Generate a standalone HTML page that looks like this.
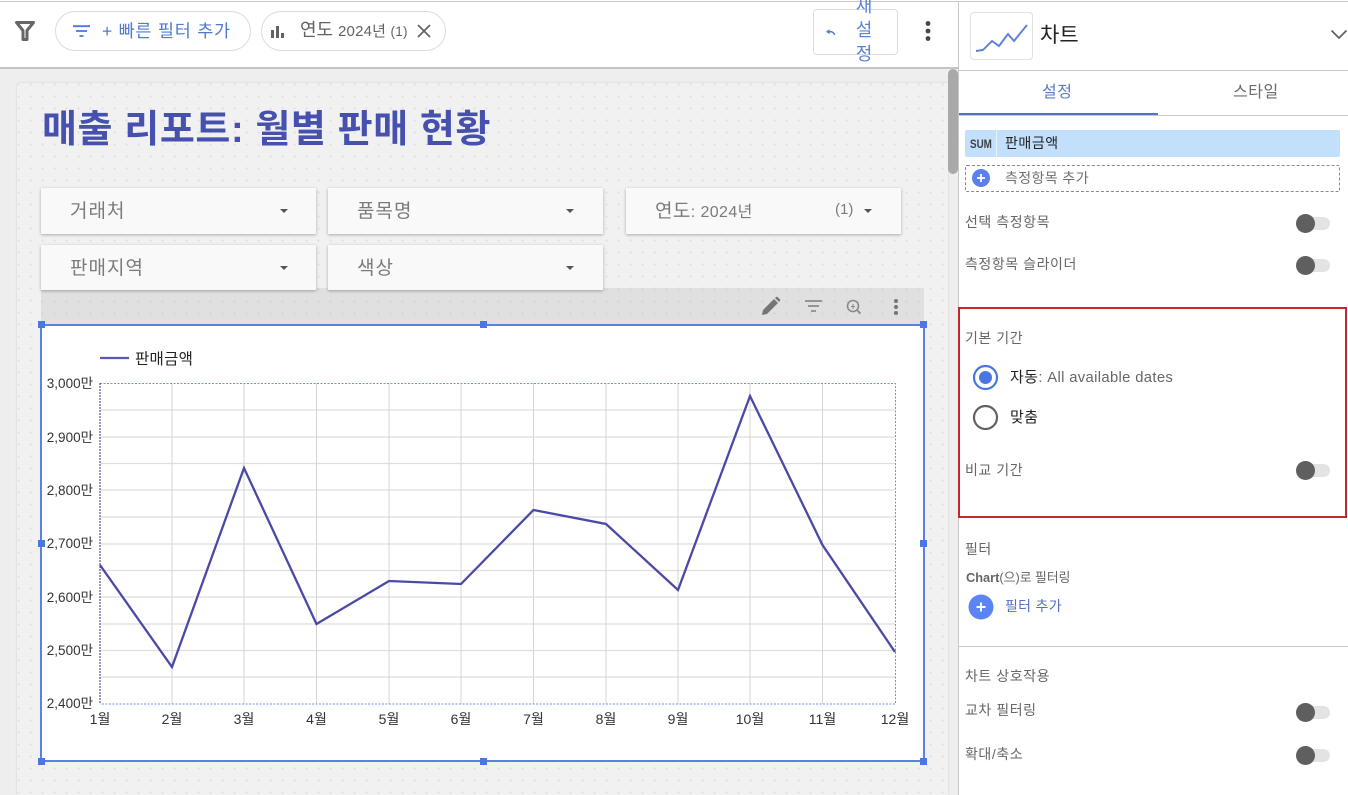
<!DOCTYPE html>
<html lang="ko"><head><meta charset="utf-8"><style>
html,body{margin:0;padding:0}
body{width:1348px;height:795px;position:relative;overflow:hidden;background:#fff;font-family:"Liberation Sans","Noto Sans CJK KR",sans-serif;color:#5f6368}
.a{position:absolute;white-space:nowrap}
.ctl{position:absolute;height:46px;background:#f9f9f9;box-shadow:0 1px 3px rgba(0,0,0,.3);font-size:19px;line-height:44px;color:#7b7b7b;letter-spacing:1px}
.ctl span{position:absolute;left:29px;top:2px}
.ctl i{position:absolute;top:21px;width:0;height:0;border-left:4px solid transparent;border-right:4px solid transparent;border-top:4px solid #555}
.h{position:absolute;width:7px;height:7px;background:#4a76e8}
.lbl{position:absolute;font-size:14px;line-height:18px;color:#666;white-space:nowrap;left:965px;letter-spacing:.55px}
.tg{position:absolute;left:1296px;width:34px;height:13px}
.tg b{position:absolute;left:6px;top:0;width:28px;height:13px;background:#e3e3e3;border-radius:7px}
.tg u{position:absolute;left:0;top:-3px;width:19px;height:19px;background:#5f5f5f;border-radius:50%}
</style></head><body>

<!-- canvas -->
<div class="a" style="left:0;top:68px;width:958px;height:727px;background:#eeeeee"></div>
<div class="a" style="left:17px;top:83px;width:931px;height:712px;background-color:#f1f1f1;background-image:radial-gradient(circle at 1.5px 1.5px,#dfdfdf 1px,transparent 1.2px);background-size:12px 12px;box-shadow:0 0 2px rgba(0,0,0,.12)"></div>
<div class="a" style="left:947.5px;top:69px;width:10px;height:105px;background:#a9a9a9;border-radius:5px"></div>

<!-- toolbar -->
<div class="a" style="left:0;top:0;width:958px;height:67px;background:#fff"></div>
<div class="a" style="left:0;top:1px;width:1348px;height:1px;background:#c8c8c8"></div>
<div class="a" style="left:0;top:67px;width:958px;height:2px;background:#c4c4c4"></div>
<svg class="a" style="left:14px;top:20px" width="22" height="22" viewBox="0 0 22 22"><path d="M2.500 2.500h17l-6.500 8v9h-4v-9z" fill="none" stroke="#666" stroke-width="3" stroke-linejoin="round"/></svg>

<div class="a" style="left:55px;top:11px;width:194px;height:38px;border:1px solid #dadce0;border-radius:20px"></div>
<svg class="a" style="left:73px;top:25px" width="17" height="13" viewBox="0 0 17 13"><path d="M0 1.200h17M3 6h11M6.500 11h4" stroke="#4a76d8" stroke-width="1.800"/></svg>
<div class="a" style="left:102px;top:20px;font-size:17.5px;line-height:22px;color:#5079d0;letter-spacing:.75px">+ 빠른 필터 추가</div>

<div class="a" style="left:261px;top:11px;width:183px;height:38px;border:1px solid #dadce0;border-radius:20px"></div>
<svg class="a" style="left:270px;top:26px" width="15" height="12" viewBox="0 0 15 12"><path d="M1 4h3v8H1zM6 0h3v12H6zM11 7h3v5h-3z" fill="#5f6368"/></svg>
<div class="a" style="left:300px;top:19px;font-size:18px;line-height:22px;color:#5f6368">연도</div>
<div class="a" style="left:338px;top:22px;font-size:15px;line-height:20px;color:#5f6368;letter-spacing:.2px">2024년 <span style="font-size:13.500px">(1)</span></div>
<svg class="a" style="left:417px;top:24px" width="14" height="14" viewBox="0 0 14 14"><path d="M1 1l12 12M13 1L1 13" stroke="#5f6368" stroke-width="1.700"/></svg>

<div class="a" style="left:813px;top:9px;width:83px;height:44px;border:1px solid #dadce0;border-radius:4px"></div>
<svg class="a" style="left:824px;top:27px" width="14" height="10" viewBox="0 0 14 10"><path d="M10.500 8C10 5.500 8 4.500 5 4.700" fill="none" stroke="#5079d0" stroke-width="1.500"/><path d="M2 4.700l3.600-2.600v5z" fill="#5079d0"/></svg>
<div class="a" style="left:855px;top:-6px;width:18px;font-size:18px;line-height:24px;color:#5a82d8;text-align:center;white-space:normal">새<br>설<br>정</div>
<svg class="a" style="left:923px;top:20px" width="10" height="22" viewBox="0 0 10 22"><circle cx="5" cy="3.500" r="2.400" fill="#444"/><circle cx="5" cy="11" r="2.400" fill="#444"/><circle cx="5" cy="18.500" r="2.400" fill="#444"/></svg>

<!-- title -->
<div class="a" style="left:42px;top:106px;font-size:38px;line-height:48px;font-weight:700;color:#4650ae;letter-spacing:.6px">매출 리포트: 월별 판매 현황</div>

<!-- chart header strip -->
<div class="a" style="left:41px;top:288px;width:883px;height:37px;background-color:#e0e0e0;background-image:radial-gradient(circle at 1.500px 1.500px,#d2d2d2 1px,transparent 1.200px);background-size:12px 12px"></div>

<!-- controls -->
<div class="ctl" style="left:41px;top:188px;width:275px"><span>거래처</span><i style="left:239px"></i></div>
<div class="ctl" style="left:328px;top:188px;width:275px"><span>품목명</span><i style="left:238px"></i></div>
<div class="ctl" style="left:626px;top:188px;width:275px"><span style="letter-spacing:.4px">연도<span style="position:static;font-size:16px">: 2024년</span></span><span style="left:209px;font-size:15px;top:0;letter-spacing:0">(1)</span><i style="left:238px"></i></div>
<div class="ctl" style="left:41px;top:245px;width:275px;height:45px"><span>판매지역</span><i style="left:239px"></i></div>
<div class="ctl" style="left:328px;top:245px;width:275px;height:45px"><span>색상</span><i style="left:238px"></i></div>

<svg class="a" style="left:760px;top:296px" width="150" height="22" viewBox="0 0 150 22">
<path d="M2 19l1-5L14 3l4 4L7 18z" fill="#757575"/><path d="M15 2l2-1.500 3.500 3.500-1.500 2z" fill="#757575"/>
<path d="M45 5h17M48 10h11M51 15h5" stroke="#8a8a8a" stroke-width="1.700" fill="none"/>
<circle cx="93" cy="10" r="5.500" fill="none" stroke="#8a8a8a" stroke-width="1.600"/><path d="M97 14l3.500 3.500" stroke="#8a8a8a" stroke-width="1.800"/><path d="M91 10.500h4M93 8v5" stroke="#8a8a8a" stroke-width="1"/>
<circle cx="136" cy="5" r="2" fill="#757575"/><circle cx="136" cy="11" r="2" fill="#757575"/><circle cx="136" cy="17" r="2" fill="#757575"/>
</svg>

<!-- chart -->
<div class="a" style="left:40px;top:324px;width:881px;height:434px;background:#fff;border:2px solid #5b80e2"></div>
<svg class="a" style="left:0;top:0" width="958" height="795" viewBox="0 0 958 795" font-family="'Liberation Sans','Noto Sans CJK KR',sans-serif">
<g stroke="#dedede" stroke-width="1.300">
<path d="M100 410H895M100 437H895M100 463.500H895M100 490H895M100 517H895M100 544H895M100 570.500H895M100 597H895M100 624H895M100 650.500H895M100 677H895"/>
</g>
<g stroke="#d4d4d4" stroke-width="1">
<path d="M172 383V704M244 383V704M316.500 383V704M389 383V704M461 383V704M533.500 383V704M606 383V704M678 383V704M750 383V704M822.500 383V704"/>
</g>
<path d="M100 383.500H895.500V704H100" fill="none" stroke="#6f8fe8" stroke-width="1" stroke-dasharray="2 1.500"/>
<path d="M100 383V704" stroke="#333a70" stroke-width="1" stroke-dasharray="2 1"/>
<polyline points="100,565 172,667 244,468 316.500,624 389,581 461,584 533.500,510 606,524 678,590 750,396 822.500,545 895,652" fill="none" stroke="#4a4aa6" stroke-width="2.300"/>
<path d="M100 358H129" stroke="#5a5ab0" stroke-width="2.300"/>
<text x="135" y="364" font-size="15.500" fill="#222" letter-spacing=".3">판매금액</text>
<g font-size="13.500" fill="#333" text-anchor="end">
<text x="93" y="388">3,000만</text><text x="93" y="442">2,900만</text><text x="93" y="495">2,800만</text><text x="93" y="548">2,700만</text><text x="93" y="602">2,600만</text><text x="93" y="655">2,500만</text><text x="93" y="708">2,400만</text>
</g>
<g font-size="14" fill="#333" text-anchor="middle">
<text x="100" y="724">1월</text><text x="172" y="724">2월</text><text x="244" y="724">3월</text><text x="316.500" y="724">4월</text><text x="389" y="724">5월</text><text x="461" y="724">6월</text><text x="533.500" y="724">7월</text><text x="606" y="724">8월</text><text x="678" y="724">9월</text><text x="750" y="724">10월</text><text x="822.500" y="724">11월</text><text x="895" y="724">12월</text>
</g>
</svg>
<div class="h" style="left:37.500px;top:321px"></div><div class="h" style="left:480px;top:321px"></div><div class="h" style="left:920px;top:321px"></div>
<div class="h" style="left:37.500px;top:540px"></div><div class="h" style="left:920px;top:540px"></div>
<div class="h" style="left:37.500px;top:757.500px"></div><div class="h" style="left:480px;top:757.500px"></div><div class="h" style="left:920px;top:757.500px"></div>

<!-- right panel -->
<div class="a" style="left:958px;top:2px;width:390px;height:793px;background:#fff;border-left:1px solid #c8c8c8;box-sizing:border-box"></div>
<div class="a" style="left:970px;top:12px;width:61px;height:46px;border:1px solid #dfe1e5;border-radius:4px"></div>
<svg class="a" style="left:970px;top:12px" width="62" height="48" viewBox="0 0 62 48"><polyline points="6,39 13,38 22,29 29,34 38,22 44,29 57,13" fill="none" stroke="#5b80dc" stroke-width="1.900"/></svg>
<div class="a" style="left:1040px;top:22px;font-size:21px;line-height:28px;color:#222">차트</div>
<svg class="a" style="left:1330px;top:28px" width="18" height="13" viewBox="0 0 18 13"><path d="M1.500 2.500L9 10l7.500-7.500" fill="none" stroke="#5f6368" stroke-width="1.700"/></svg>
<div class="a" style="left:959px;top:70px;width:389px;height:1px;background:#c8c8c8"></div>
<div class="a" style="left:1042px;top:83px;font-size:16px;line-height:20px;color:#5a7ac8;letter-spacing:.5px">설정</div>
<div class="a" style="left:1233px;top:83px;font-size:16px;line-height:20px;color:#6b6b6b;letter-spacing:.5px">스타일</div>
<div class="a" style="left:959px;top:115px;width:389px;height:1px;background:#c8c8c8"></div>
<div class="a" style="left:959px;top:113px;width:199px;height:2px;background:#5470c0"></div>

<div class="a" style="left:965px;top:130px;width:375px;height:27px;background:#c2dffc;border-radius:2px"></div>
<div class="a" style="left:996px;top:130px;width:1px;height:27px;background:#e8f2fd"></div>
<div class="a" style="left:970px;top:136px;font-size:12px;line-height:16px;font-weight:700;color:#3c4043;transform:scaleX(.82);transform-origin:0 50%">SUM</div>
<div class="a" style="left:1005px;top:134px;font-size:14px;line-height:19px;color:#222;letter-spacing:.55px">판매금액</div>
<div class="a" style="left:965px;top:165px;width:373px;height:25px;border:1px dashed #8a8a8a;border-radius:2px"></div>
<svg class="a" style="left:971px;top:168px" width="20" height="20" viewBox="0 0 20 20"><circle cx="10" cy="10" r="9" fill="#5b80ee"/><path d="M10 6v8M6 10h8" stroke="#fff" stroke-width="1.800"/></svg>
<div class="a" style="left:1005px;top:169px;font-size:14px;line-height:19px;color:#6f6f6f;letter-spacing:.4px">측정항목 추가</div>

<div class="lbl" style="top:213px">선택 측정항목</div>
<div class="tg" style="top:217px"><b></b><u></u></div>
<div class="lbl" style="top:255px">측정항목 슬라이더</div>
<div class="tg" style="top:259px"><b></b><u></u></div>

<div class="a" style="left:958px;top:307px;width:389px;height:211px;border:2px solid #c9252c;box-sizing:border-box"></div>
<div class="lbl" style="top:329px">기본 기간</div>
<svg class="a" style="left:972px;top:364px" width="28" height="66" viewBox="0 0 28 66"><circle cx="13.500" cy="13.500" r="11.500" fill="none" stroke="#4a76e0" stroke-width="2.200"/><circle cx="13.500" cy="13.500" r="6.500" fill="#4a76e0"/><circle cx="13.500" cy="53.500" r="11.500" fill="none" stroke="#5f6368" stroke-width="2.200"/></svg>
<div class="a" style="left:1010px;top:368px;font-size:15px;line-height:19px;color:#222;letter-spacing:.35px">자동<span style="color:#666;font-size:14.800px">: All available dates</span></div>
<div class="a" style="left:1010px;top:408px;font-size:15px;line-height:19px;color:#222;letter-spacing:.35px">맞춤</div>
<div class="lbl" style="top:461px">비교 기간</div>
<div class="tg" style="top:464px"><b></b><u></u></div>

<div class="lbl" style="top:540px">필터</div>
<div class="lbl" style="top:569px;font-size:12.800px;letter-spacing:0;left:966px"><b>Chart</b>(으)로 필터링</div>
<svg class="a" style="left:968px;top:594px" width="26" height="26" viewBox="0 0 26 26"><circle cx="13" cy="13" r="12.500" fill="#5b85f5"/><path d="M13 8.500v9M8.500 13h9" stroke="#fff" stroke-width="2"/></svg>
<div class="a" style="left:1005px;top:597px;font-size:14px;line-height:19px;color:#5470c0;letter-spacing:.3px">필터 추가</div>
<div class="a" style="left:959px;top:646px;width:389px;height:1px;background:#c8c8c8"></div>
<div class="lbl" style="top:667px">차트 상호작용</div>
<div class="lbl" style="top:701px">교차 필터링</div>
<div class="tg" style="top:706px"><b></b><u></u></div>
<div class="lbl" style="top:745px">확대/축소</div>
<div class="tg" style="top:749px"><b></b><u></u></div>
</body></html>
